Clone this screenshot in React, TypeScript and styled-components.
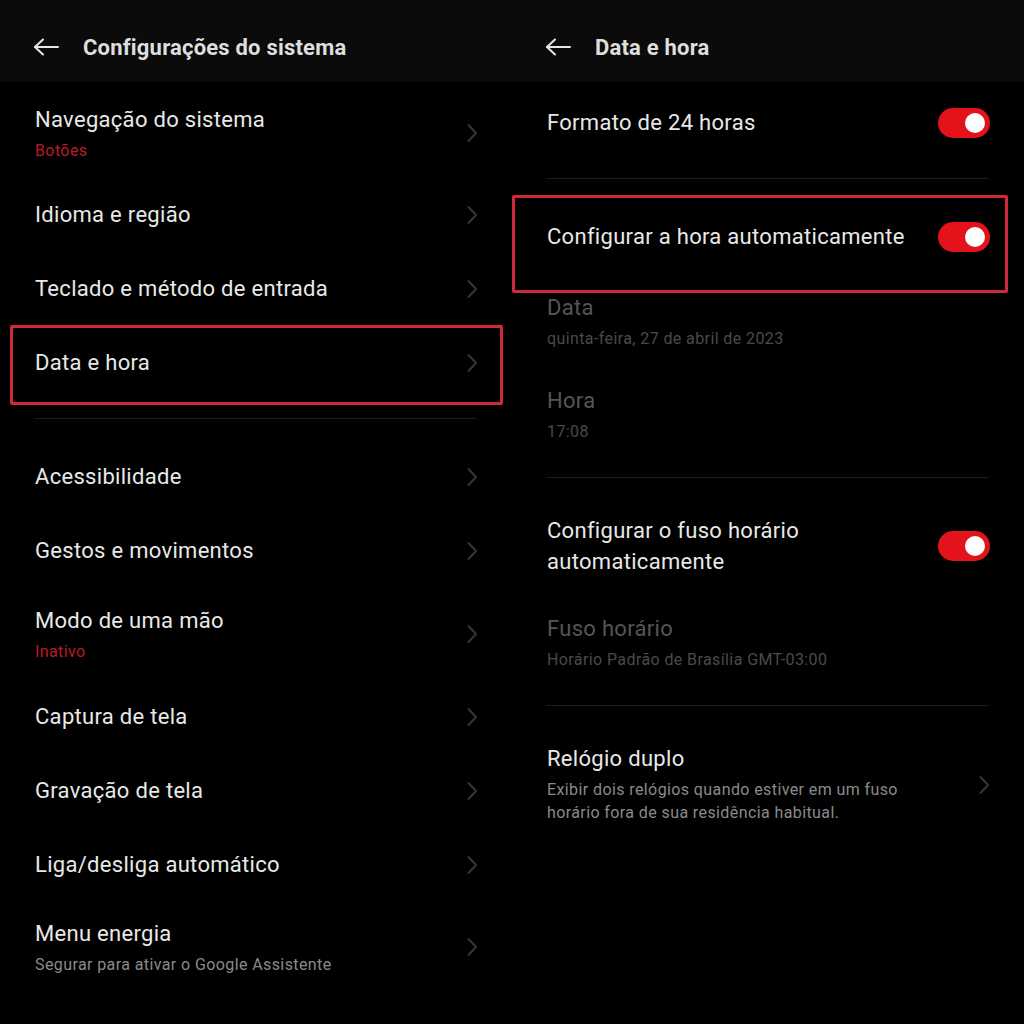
import React from 'react';
import styled, { createGlobalStyle } from 'styled-components';

const GlobalStyle = createGlobalStyle`
  html, body {
    margin: 0;
    padding: 0;
    background: #000;
  }
  body {
    font-family: Roboto, "Noto Sans", "Liberation Sans", sans-serif;
    -webkit-font-smoothing: antialiased;
  }
`;

type Tone = 'red' | 'gray' | 'dim';

interface NavItem {
  title: string;
  subtitle?: string;
  tone?: Tone;
  height: number;
  highlight?: boolean;
}

const firstGroup: NavItem[] = [
  { title: 'Navegação do sistema', subtitle: 'Botões', tone: 'red', height: 90 },
  { title: 'Idioma e região', height: 74 },
  { title: 'Teclado e método de entrada', height: 74 },
  { title: 'Data e hora', height: 74, highlight: true },
];

const secondGroup: NavItem[] = [
  { title: 'Acessibilidade', height: 74 },
  { title: 'Gestos e movimentos', height: 74 },
  { title: 'Modo de uma mão', subtitle: 'Inativo', tone: 'red', height: 92 },
  { title: 'Captura de tela', height: 74 },
  { title: 'Gravação de tela', height: 74 },
  { title: 'Liga/desliga automático', height: 74 },
  { title: 'Menu energia', subtitle: 'Segurar para ativar o Google Assistente', tone: 'gray', height: 90 },
];

const BackArrow = () => (
  <svg width="26" height="18" viewBox="0 0 26 18" fill="none">
    <path d="M2 9 H25" stroke="#e6e6e6" strokeWidth="2" strokeLinecap="round" />
    <path d="M10 1.5 L2 9 L10 16.5" stroke="#e6e6e6" strokeWidth="2" strokeLinecap="round" strokeLinejoin="round" />
  </svg>
);

const Chevron = () => (
  <svg width="12" height="20" viewBox="0 0 12 20" fill="none">
    <path d="M2.5 2 L10 10 L2.5 18" stroke="#363636" strokeWidth="2" strokeLinecap="round" strokeLinejoin="round" />
  </svg>
);

const NavRow: React.FC<{ item: NavItem }> = ({ item }) => {
  const row = (
    <Row $height={item.height}>
      <TextBlock>
        <Title>{item.title}</Title>
        {item.subtitle && <Subtitle $tone={item.tone ?? 'gray'}>{item.subtitle}</Subtitle>}
      </TextBlock>
      <Chevron />
    </Row>
  );
  if (item.highlight) {
    return <Highlight $inset="-1px 9px -5px 10px">{row}</Highlight>;
  }
  return row;
};

export default function App() {
  return (
    <>
      <GlobalStyle />
      <Screen>
        <Panel>
          <Header>
            <BackArrow />
            <HeaderTitle>Configurações do sistema</HeaderTitle>
          </Header>
          <List $top={6}>
            {firstGroup.map((item) => (
              <NavRow key={item.title} item={item} />
            ))}
            <Divider $before={18} $after={21} />
            {secondGroup.map((item) => (
              <NavRow key={item.title} item={item} />
            ))}
          </List>
        </Panel>

        <Panel>
          <Header>
            <BackArrow />
            <HeaderTitle>Data e hora</HeaderTitle>
          </Header>
          <List $top={4}>
            <Row $height={74}>
              <Title>Formato de 24 horas</Title>
              <Toggle />
            </Row>
            <Divider $before={18} $after={21} />
            <Highlight $inset="-5px 16px -19px 0px">
              <Row $height={74}>
                <Title>Configurar a hora automaticamente</Title>
                <Toggle />
              </Row>
            </Highlight>
            <Row $height={94}>
              <TextBlock>
                <Title $dim>Data</Title>
                <Subtitle $tone="dim">quinta-feira, 27 de abril de 2023</Subtitle>
              </TextBlock>
            </Row>
            <Row $height={93}>
              <TextBlock>
                <Title $dim>Hora</Title>
                <Subtitle $tone="dim">17:08</Subtitle>
              </TextBlock>
            </Row>
            <Divider $before={16} $after={14} />
            <Row $height={108}>
              <WrapTitle>Configurar o fuso horário automaticamente</WrapTitle>
              <Toggle />
            </Row>
            <Row $height={84}>
              <TextBlock>
                <Title $dim>Fuso horário</Title>
                <Subtitle $tone="dim">Horário Padrão de Brasília GMT-03:00</Subtitle>
              </TextBlock>
            </Row>
            <Divider $before={21} $after={14} />
            <DetailRow>
              <TextBlock>
                <Title>Relógio duplo</Title>
                <Description>
                  Exibir dois relógios quando estiver em um fuso horário fora de sua residência habitual.
                </Description>
              </TextBlock>
              <Chevron />
            </DetailRow>
          </List>
        </Panel>
      </Screen>
    </>
  );
}

const Screen = styled.div`
  display: grid;
  grid-template-columns: 512px 512px;
  width: 1024px;
  height: 1024px;
  background: #000;
  overflow: hidden;
`;

const Panel = styled.div`
  display: flex;
  flex-direction: column;
  min-width: 0;
`;

const Header = styled.div`
  height: 82px;
  box-sizing: border-box;
  padding: 12px 0 0 33px;
  display: flex;
  align-items: center;
  gap: 24px;
  background: #0b0b0b;
`;

const HeaderTitle = styled.div`
  color: #dedede;
  font-size: 22px;
  font-weight: 700;
  letter-spacing: 0.2px;
`;

const List = styled.div<{ $top: number }>`
  display: flex;
  flex-direction: column;
  padding-top: ${props => props.$top}px;
`;

const Row = styled.div<{ $height: number }>`
  height: ${props => props.$height}px;
  box-sizing: border-box;
  padding: 0 34px 0 35px;
  display: flex;
  align-items: center;
  justify-content: space-between;
  gap: 16px;
`;

const DetailRow = styled.div`
  box-sizing: border-box;
  padding: 25px 34px 0 35px;
  display: flex;
  align-items: center;
  justify-content: space-between;
  gap: 40px;
`;

const TextBlock = styled.div`
  display: flex;
  flex-direction: column;
  min-width: 0;
`;

const Title = styled.div<{ $dim?: boolean }>`
  color: ${props => (props.$dim ? '#555555' : '#e8e8e8')};
  font-size: 22px;
  line-height: 28px;
  letter-spacing: 0.3px;
`;

const WrapTitle = styled.div`
  color: #e8e8e8;
  font-size: 22px;
  line-height: 31px;
  letter-spacing: 0.3px;
  max-width: 300px;
`;

const Subtitle = styled.div<{ $tone: Tone }>`
  color: ${props =>
    props.$tone === 'red' ? '#b81c26' : props.$tone === 'gray' ? '#8a8a8a' : '#4a4a4a'};
  font-size: 16px;
  line-height: 20px;
  letter-spacing: 0.4px;
  margin-top: 7px;
`;

const Description = styled.div`
  color: #8a8a8a;
  font-size: 16px;
  line-height: 23px;
  letter-spacing: 0.4px;
  margin-top: 5px;
  max-width: 380px;
`;

const Divider = styled.div<{ $before: number; $after: number }>`
  height: 1px;
  background: #1c1c1c;
  margin: ${props => props.$before}px 35px ${props => props.$after}px 34px;
`;

const Highlight = styled.div<{ $inset: string }>`
  position: relative;

  &::after {
    content: '';
    position: absolute;
    inset: ${props => props.$inset};
    border: 3px solid #d3273a;
    border-radius: 2px;
    pointer-events: none;
  }
`;

const Toggle = styled.div`
  flex: none;
  position: relative;
  width: 52px;
  height: 30px;
  border-radius: 15px;
  background: #e3121b;

  &::after {
    content: '';
    position: absolute;
    top: 5px;
    right: 5px;
    width: 20px;
    height: 20px;
    border-radius: 50%;
    background: #fff;
  }
`;
